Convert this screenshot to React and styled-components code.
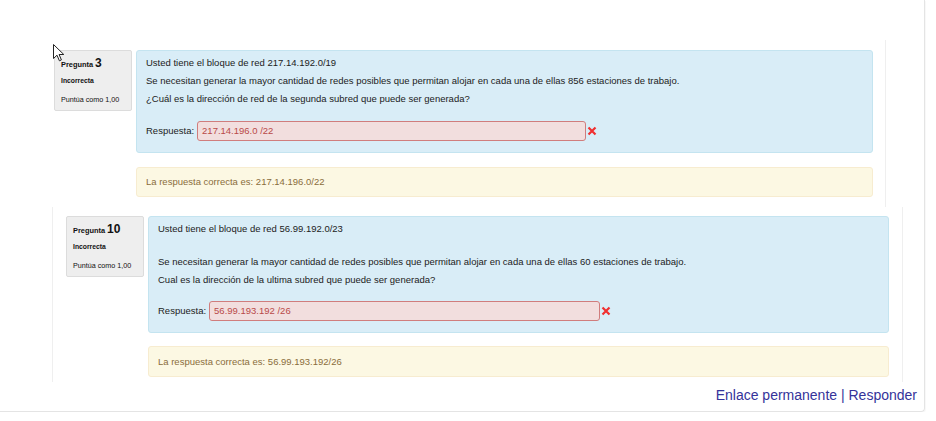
import styled, { createGlobalStyle } from "styled-components";

const GlobalStyle = createGlobalStyle`
  html, body {
    margin: 0;
    padding: 0;
    background: #fff;
  }
  body {
    font-family: "Liberation Sans", Arial, sans-serif;
    color: #333;
  }
`;

const Post = styled.div`
  position: relative;
  width: 925px;
  box-sizing: border-box;
  padding-top: 40px;
  border-right: 1px solid #e4e4e4;
  border-bottom: 1px solid #e4e4e4;
  border-bottom-right-radius: 4px;
  box-shadow: 1px 1px 1px rgba(0, 0, 0, 0.03);
`;

const Question = styled.div`
  display: flex;
  align-items: flex-start;
  gap: 4px;
  box-sizing: border-box;
  margin-left: ${(p) => p.$left}px;
  width: ${(p) => p.$width}px;
  padding: ${(p) => p.$pad};
  border-right: 1px solid #efefef;
  border-left: ${(p) => (p.$bordered ? "1px solid #efefef" : "none")};
`;

const Info = styled.div`
  flex: none;
  width: 78px;
  box-sizing: border-box;
  padding: 5px 6px 4px;
  background: #eee;
  border: 1px solid #dcdcdc;
  border-radius: 2px;
  color: #111;
`;

const QNo = styled.div`
  font-size: 7.4px;
  font-weight: bold;
  line-height: 14px;
  span {
    font-size: 12px;
  }
`;

const State = styled.div`
  margin-top: 3px;
  font-size: 6.8px;
  font-weight: bold;
  line-height: 12px;
`;

const Grade = styled.div`
  margin-top: 7px;
  font-size: 7.2px;
  line-height: 12px;
  color: #111;
`;

const Body = styled.div`
  flex: 1;
  min-width: 0;
`;

const Formulation = styled.div`
  box-sizing: border-box;
  padding: 3px 9px 11px;
  background: #d9edf7;
  border: 1px solid #c4e4f0;
  border-radius: 3px;
  font-size: 9.5px;
  line-height: 18px;
  color: #222;
`;

const Text = styled.p`
  margin: 0;
  margin-top: ${(p) => p.$gap || 0}px;
`;

const Answer = styled.div`
  display: flex;
  align-items: center;
  margin-top: ${(p) => p.$gap}px;
`;

const Label = styled.span`
  margin-right: 3px;
`;

const Input = styled.div`
  box-sizing: border-box;
  width: ${(p) => p.$width}px;
  height: 20px;
  padding: 0 4px;
  background: #f2dede;
  border: 1px solid #d07d7d;
  border-radius: 3px;
  color: #b94a48;
  line-height: 18px;
`;

const Cross = styled.svg`
  margin-left: 1px;
  width: 10px;
  height: 10px;
`;

const Feedback = styled.div`
  margin-top: ${(p) => p.$gap}px;
  box-sizing: border-box;
  padding: ${(p) => p.$pad};
  background: #fcf8e3;
  border: 1px solid #f7ecd0;
  border-radius: 3px;
  font-size: 9.5px;
  line-height: 18px;
  color: #8a6d3b;
`;

const Commands = styled.div`
  padding: 3px 7px 6px 0;
  text-align: right;
  font-size: 14px;
  line-height: 20px;
  color: #35339a;
  a {
    color: #35339a;
    text-decoration: none;
  }
`;

const Cursor = styled.svg`
  position: absolute;
  left: 53px;
  top: 44px;
  width: 12px;
  height: 18px;
`;

const XMark = () => (
  <Cross viewBox="0 0 10 10">
    <path d="M1.5 1.5 L8.5 8.5 M8.5 1.5 L1.5 8.5" stroke="#f03030" strokeWidth="2.2" />
  </Cross>
);

const questions = [
  {
    no: 3,
    left: 54,
    width: 832,
    pad: "10px 12px 10px 0",
    bordered: false,
    lines: [
      ["Usted tiene el bloque de red 217.14.192.0/19", 0],
      ["Se necesitan generar la mayor cantidad de redes posibles que permitan alojar en cada una de ellas 856 estaciones de trabajo.", 0],
      ["¿Cuál es la dirección de red de la segunda subred que puede ser generada?", 0],
    ],
    answer: "217.14.196.0 /22",
    inputWidth: 389,
    correct: "217.14.196.0/22",
    fbGap: 14,
    fbPad: "5px 9px",
  },
  {
    no: 10,
    left: 52,
    width: 851,
    pad: "9px 13px 5px 13px",
    bordered: true,
    lines: [
      ["Usted tiene el bloque de red 56.99.192.0/23", 0],
      ["Se necesitan generar la mayor cantidad de redes posibles que permitan alojar en cada una de ellas 60 estaciones de trabajo.", 15],
      ["Cual es la dirección de la ultima subred que puede ser generada?", 0],
    ],
    answer: "56.99.193.192 /26",
    inputWidth: 391,
    correct: "56.99.193.192/26",
    fbGap: 13,
    fbPad: "6px 9px 5px",
  },
];

export default function App() {
  return (
    <>
      <GlobalStyle />
      <Post>
        {questions.map((q) => (
          <Question key={q.no} $left={q.left} $width={q.width} $pad={q.pad} $bordered={q.bordered}>
            <Info>
              <QNo>
                Pregunta <span>{q.no}</span>
              </QNo>
              <State>Incorrecta</State>
              <Grade>Puntúa como 1,00</Grade>
            </Info>
            <Body>
              <Formulation>
                {q.lines.map(([t, g]) => (
                  <Text key={t} $gap={g}>
                    {t}
                  </Text>
                ))}
                <Answer $gap={q.no === 3 ? 13 : 12}>
                  <Label>Respuesta:</Label>
                  <Input $width={q.inputWidth}>{q.answer}</Input>
                  <XMark />
                </Answer>
              </Formulation>
              <Feedback $gap={q.fbGap} $pad={q.fbPad}>
                La respuesta correcta es: {q.correct}
              </Feedback>
            </Body>
          </Question>
        ))}
        <Commands>
          <a href="#p">Enlace permanente</a> | <a href="#r">Responder</a>
        </Commands>
        <Cursor viewBox="0 0 12 18">
          <path d="M0.5 0.5 L0.5 14.5 L4 11.2 L6.4 16.8 L8.4 15.9 L6.1 10.5 L10.8 10.5 Z" fill="#fff" stroke="#222" strokeWidth="1" strokeLinejoin="round" />
        </Cursor>
      </Post>
    </>
  );
}
